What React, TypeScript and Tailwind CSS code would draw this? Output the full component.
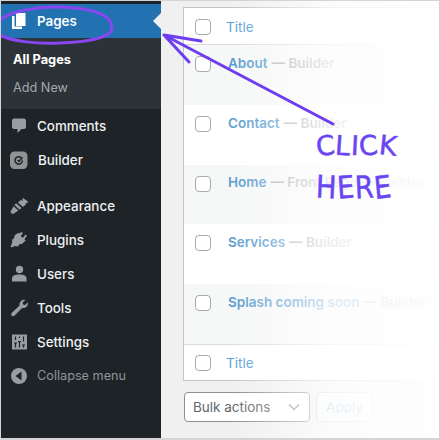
import React from "react";

const ic = "#989da1";

const icons: Record<string, React.ReactNode> = {
  pages: (
    <svg width="20" height="20" viewBox="0 0 20 20" fill="#fff">
      <path d="M7 2h9.500v13H7z" />
      <path d="M3 5h2.500v10.500H13V18H3z" />
    </svg>
  ),
  comments: (
    <svg width="20" height="20" viewBox="0 0 20 20" fill={ic}>
      <path d="M5 2.500h10c1 0 2 1 2 2v6.500c0 1-1 2-2 2h-2.500L8.500 17v-4H5c-1 0-2-1-2-2V4.500c0-1 1-2 2-2z" />
    </svg>
  ),
  builder: (
    <svg width="20" height="20" viewBox="0 0 20 20">
      <rect x="1" y="1.500" width="17.500" height="17.500" rx="4.500" fill="#8f9396" />
      <path d="M12 7.500a3.700 3.700 0 1 0 1.400 3.500" fill="none" stroke="#1d2327" strokeWidth="1.500" strokeLinecap="round" />
      <path d="M9 10.500l1 1 3.200-3.800" fill="none" stroke="#1d2327" strokeWidth="1.500" strokeLinecap="round" />
    </svg>
  ),
  appearance: (
    <svg width="20" height="20" viewBox="0 0 20 20" fill={ic}>
      <path d="M19 5.500l-5-3.500-.8 1.300 1 1.500-2.300-.9-3 2.700 5 4.500 3-2.500-.3-1.700 1.600.3zM7.200 7.200l5.300 4.800-1.800 1.700-5.300-4.800zM4.600 10.200l4.800 4.300-5.600 3.800-2.500-2.300z" />
    </svg>
  ),
  plugins: (
    <svg width="20" height="20" viewBox="0 0 20 20" fill={ic}>
      <path d="M12 2l1.900 1-2.200 3.500 2.300 1.300 2.500-3.200 1.500 1.200-2.600 3.400 1.400 1.100-1.500 1.500c-1.200 1.800-3 2.800-5 2.400l-1.300 2.400-3-.6-3.700 1.400-.7-1.200 1.500-3.300.1-3.400 2-1.300c-.2-1.800.6-3.300 2.200-4.300l2.200-1.200.7 1.100z" />
    </svg>
  ),
  users: (
    <svg width="20" height="20" viewBox="0 0 20 20" fill={ic}>
      <circle cx="10.500" cy="5.500" r="3.700" />
      <path d="M10.500 10.500c4.500 0 7 1.500 7 3.700v3.300h-14.500v-3.300c0-2.200 2.500-3.700 7.500-3.700z" />
    </svg>
  ),
  tools: (
    <svg width="20" height="20" viewBox="0 0 20 20" fill={ic}>
      <path d="M16.500 1.800l-2.800 2.700.3 2 2 .4 2.800-2.700c.3 1.900-.2 3.600-1.500 4.800-1.200 1.100-2.800 1.300-4.300.9l-7.300 7.600c-.9.900-2.100 1-2.900.2-.8-.8-.8-2.100.1-3l7.700-7.100c-.4-1.600 0-3.200 1.300-4.400 1.300-1.200 3-1.600 4.600-1.400z" />
    </svg>
  ),
  settings: (
    <svg width="20" height="20" viewBox="0 0 20 20">
      <rect x="3" y="2.500" width="15" height="15" fill={ic} />
      <path d="M6.500 4.500v3.500M6.500 11v4.500M5 11h3M10.500 4.500v1.500M10.500 9.500v6M9 9.500h3M14.500 4.500v5M14.500 13v2.500M13 13h3" stroke="#1d2327" strokeWidth="1.200" fill="none" />
    </svg>
  ),
  collapse: (
    <svg width="20" height="20" viewBox="0 0 20 20">
      <circle cx="10" cy="10" r="8" fill={ic} />
      <path d="M12.500 5.500v9L6.500 10z" fill="#1d2327" />
    </svg>
  ),
};

function MenuItem({ icon, label, builder }: { icon: string; label: string; builder?: boolean }) {
  return (
    <div className="flex h-[34px] items-center pl-[8px]">
      <span className="flex w-[28px] shrink-0 items-center">{icons[icon]}</span>
      <span className={`text-[13.400px] font-medium text-[#eef0f1] ${builder ? "ml-[1px]" : ""}`}>{label}</span>
    </div>
  );
}

function Box() {
  return <span className="block h-[16px] w-[16px] shrink-0 rounded-[4px] border border-[#a7aaad] bg-white" />;
}

function Row({ title, meta, alt }: { title: string; meta: string; alt?: boolean }) {
  return (
    <div className={`flex h-[59.800px] pl-[11px] pt-[11px] ${alt ? "bg-[#f6f7f7]" : "bg-white"}`}>
      <Box />
      <div className="ml-[17px] flex h-[14px] items-center whitespace-nowrap text-[13.500px] font-semibold text-[#5b9dd0]">
        {title}
        <span className="ml-[4px] font-semibold text-[#b0b3b6]">— {meta}</span>
      </div>
    </div>
  );
}

function Letters({ word, tilts }: { word: string; tilts: number[] }) {
  return (
    <>
      {word.split("").map((ch, i) => (
        <span key={i} className="inline-block" style={{ transform: `rotate(${tilts[i]}deg)` }}>
          {ch}
        </span>
      ))}
    </>
  );
}

export default function App() {
  return (
    <div className="relative flex h-[440px] w-[440px] overflow-hidden border-b-2 border-l border-r border-t border-[#d4d4d6] bg-[#f0f0f1] font-['Inter','Liberation_Sans',sans-serif]">
      <aside className="flex w-[160px] shrink-0 flex-col bg-[#1d2327] pt-[3px]">
        <div className="relative flex h-[34px] items-center bg-[#2271b1] pl-[8px]">
          <span className="flex w-[28px] shrink-0 items-center">{icons.pages}</span>
          <span className="text-[13.400px] font-semibold text-white">Pages</span>
          <span className="absolute right-0 top-[9px] h-0 w-0 border-y-[8px] border-r-[8px] border-y-transparent border-r-[#f0f0f1]" />
        </div>
        <div className="flex h-[71px] flex-col bg-[#2c3338] pl-[12px] pt-[8px]">
          <div className="flex h-[28px] items-center text-[12.800px] font-bold text-white">All Pages</div>
          <div className="flex h-[28px] items-center text-[12.700px] text-[#a4a8ac]">Add New</div>
        </div>
        <MenuItem icon="comments" label="Comments" />
        <MenuItem icon="builder" label="Builder" builder />
        <div className="h-[12px]" />
        <MenuItem icon="appearance" label="Appearance" />
        <MenuItem icon="plugins" label="Plugins" />
        <MenuItem icon="users" label="Users" />
        <MenuItem icon="tools" label="Tools" />
        <MenuItem icon="settings" label="Settings" />
        <div className="flex h-[33px] items-center pl-[8px]">
          <span className="flex w-[28px] shrink-0 items-center">{icons.collapse}</span>
          <span className="text-[12.700px] text-[#8f9499]">Collapse menu</span>
        </div>
      </aside>

      <main className="flex-1 pl-[22px] pt-[6px]">
        <section className="border border-r-0 border-[#c3c4c7] bg-white">
          <div className="flex h-[37px] items-center border-b border-[#dcdcde] pl-[11px] pt-[2px]">
            <Box />
            <span className="ml-[15px] text-[13.500px] text-[#5c9fd6]">Title</span>
          </div>
          <Row alt title="About" meta="Builder" />
          <Row title="Contact" meta="Builder" />
          <Row alt title="Home" meta="Front Page — Builder" />
          <Row title="Services" meta="Builder" />
          <Row alt title="Splash coming soon" meta="Builder" />
          <div className="flex h-[36px] items-center border-t border-[#dcdcde] pl-[11px] pt-[1px]">
            <Box />
            <span className="ml-[15px] text-[13.500px] text-[#5c9fd6]">Title</span>
          </div>
        </section>
        <div className="ml-px mt-[11px] flex gap-[6px]">
          <div className="flex h-[30px] w-[126px] items-center justify-between rounded-[4px] border border-[#8c8f94] bg-white pl-[8px] pr-[7px] text-[13.500px] text-[#5f666c]">
            Bulk actions
            <svg width="16" height="16" viewBox="0 0 16 16" fill="none" stroke="#8c8f94" strokeWidth="1.500">
              <path d="M3 5.500l5 5 5-5" />
            </svg>
          </div>
          <div className="flex h-[30px] w-[57px] items-center justify-center rounded-[4px] border border-[#b8d2e8] bg-[#f6f7f7] text-[13.500px] text-[#8db9dc]">
            Apply
          </div>
        </div>
      </main>

      <div className="pointer-events-none absolute inset-y-0 left-[230px] right-0 bg-gradient-to-r from-transparent via-white/80 via-50% to-white/95" />

      <svg className="pointer-events-none absolute left-[-1px] top-[-1px]" width="440" height="440" viewBox="0 0 440 440" fill="none">
        <path d="M0 20C10 12 35 6 60 7c30 1 52 7 52 21 0 10-27 14-52 15-25 1-50-2-60-8" stroke="#8a46f0" strokeWidth="3" strokeLinecap="round" />
        <path d="M164 35L333 124M164 35l37 6M164 35l25 27" stroke="#6d3df0" strokeWidth="3" strokeLinecap="round" />
      </svg>

      <div className="pointer-events-none absolute left-[315px] top-[128px] flex flex-col font-['DejaVu_Sans',sans-serif] text-[#6a45f2] [-webkit-text-stroke:0.5px_#6a45f2]">
        <span className="flex h-[34px] items-center whitespace-nowrap text-[27px] tracking-[0.5px]">
          <Letters word="CLICK" tilts={[-6, 4, 3, -5, 6]} />
        </span>
        <span className="mt-[6px] flex h-[36px] origin-left scale-x-[0.88] items-center whitespace-nowrap text-[31px] tracking-[0.5px]">
          <Letters word="HERE" tilts={[3, -4, -3, -6]} />
        </span>
      </div>
    </div>
  );
}
